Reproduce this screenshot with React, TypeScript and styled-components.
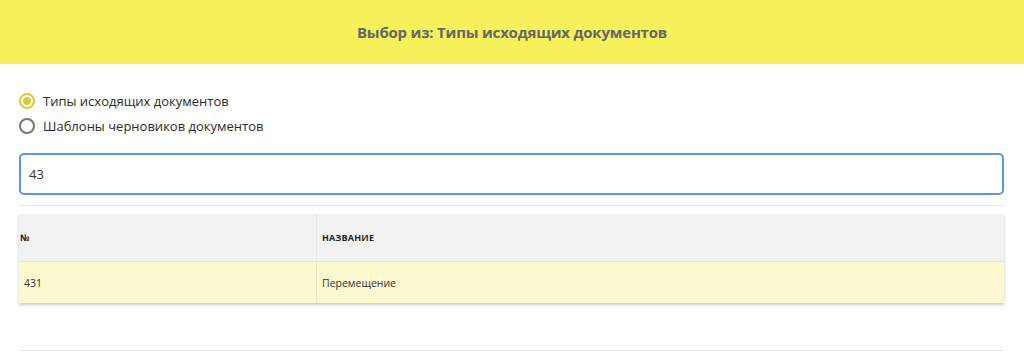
import React, { useState } from "react";
import styled, { createGlobalStyle } from "styled-components";

const Global = createGlobalStyle`
  html, body { margin: 0; padding: 0; background: #fff; }
  body { font-family: "Open Sans", "Noto Sans", sans-serif; color: #333; }
  * { box-sizing: border-box; }
`;

const Header = styled.header`
  height: 64px;
  background: #f6f15b;
  display: flex;
  align-items: center;
  justify-content: center;
`;

const Title = styled.h1`
  margin: 0;
  font-family: "Open Sans", "Noto Sans", sans-serif;
  font-weight: 700;
  font-size: 15px;
  letter-spacing: -0.2px;
  color: #666;
`;

const Main = styled.main`
  padding: 26px 20px 0 19px;
  display: flex;
  flex-direction: column;
`;

const RadioGroup = styled.div`
  display: flex;
  flex-direction: column;
  gap: 4px;
`;

const RadioRow = styled.label`
  display: flex;
  align-items: center;
  gap: 8px;
  height: 21px;
  font-size: 13px;
  color: #2b2b2b;
  cursor: pointer;
`;

const Circle = styled.span<{ $on: boolean }>`
  width: 16px;
  height: 16px;
  border-radius: 50%;
  border: 2px solid ${(p) => (p.$on ? "#d8cb3c" : "#777")};
  display: flex;
  align-items: center;
  justify-content: center;
  &::after {
    content: "";
    width: 8px;
    height: 8px;
    border-radius: 50%;
    background: ${(p) => (p.$on ? "#d8cb3c" : "transparent")};
  }
`;

const Search = styled.input`
  margin-top: 17px;
  height: 42px;
  width: 100%;
  border: 2px solid #5b95e6;
  border-radius: 5px;
  padding: 0 8px;
  font-family: "Open Sans", "Noto Sans", sans-serif;
  font-size: 13px;
  color: #333;
  outline: none;
`;

const Divider = styled.hr<{ $top: number }>`
  margin: ${(p) => p.$top}px 0 0;
  border: none;
  border-top: 1px solid #e4e4e4;
  width: 100%;
`;

const Table = styled.div`
  margin-top: 8px;
  display: grid;
  grid-template-columns: 297px 1fr;
  box-shadow: 0 2px 3px rgba(0, 0, 0, 0.22);
`;

const HeadCell = styled.div<{ $pad: number }>`
  height: 48px;
  background: #f2f2f2;
  display: flex;
  align-items: center;
  padding-left: ${(p) => p.$pad}px;
  font-family: "Open Sans", "Noto Sans", sans-serif;
  font-weight: 700;
  font-size: 9px;
  letter-spacing: 0.2px;
  color: #222;
  text-transform: uppercase;
  border-bottom: 1px solid #e2e2e2;
  & + & { border-left: 1px solid #e6e6e6; }
`;

const Cell = styled.div<{ $first?: boolean }>`
  height: 41px;
  background: #fcf8d0;
  display: flex;
  align-items: center;
  padding-left: 5px;
  font-family: "Open Sans", "Noto Sans", sans-serif;
  font-size: 10.5px;
  color: #333;
  border-left: ${(p) => (p.$first ? "none" : "1px solid #efe9c0")};
`;

export default function App() {
  const [sel, setSel] = useState(0);
  const options = ["Типы исходящих документов", "Шаблоны черновиков документов"];
  return (
    <>
      <Global />
      <Header>
        <Title>Выбор из: Типы исходящих документов</Title>
      </Header>
      <Main>
        <RadioGroup>
          {options.map((o, i) => (
            <RadioRow key={o} onClick={() => setSel(i)}>
              <Circle $on={sel === i} />
              {o}
            </RadioRow>
          ))}
        </RadioGroup>
        <Search defaultValue="43" />
        <Divider $top={10} />
        <Table>
          <HeadCell $pad={1}>№</HeadCell>
          <HeadCell $pad={5}>Название</HeadCell>
          <Cell $first>431</Cell>
          <Cell>Перемещение</Cell>
        </Table>
        <Divider $top={47} />
      </Main>
    </>
  );
}
